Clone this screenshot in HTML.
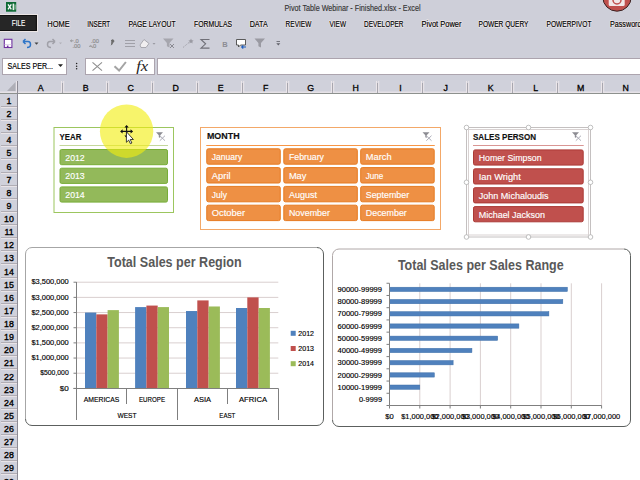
<!DOCTYPE html>
<html><head><meta charset="utf-8">
<style>
html,body{margin:0;padding:0;width:640px;height:480px;overflow:hidden;background:#fff;}
svg text{stroke-width:0.15px;}
svg{display:block;font-family:"Liberation Sans",sans-serif;}
</style></head>
<body>
<svg width="640" height="480" viewBox="0 0 640 480">
<rect x="0" y="0" width="640" height="80" fill="#cecfd9"/>
<text x="284.5" y="11.3" font-size="9.5" fill="#333" textLength="136" lengthAdjust="spacingAndGlyphs" stroke="#333">Pivot Table Webinar - Finished.xlsx - Excel</text>
<rect x="6" y="2" width="10.2" height="9.7" fill="#0f6a35"/>
<path d="M8 4.3 L11.3 9.3 M11.3 4.3 L8 9.3" stroke="#fff" stroke-width="1.3"/>
<rect x="12.6" y="3.6" width="1.6" height="6.5" fill="#e6f2ea"/>
<rect x="14.6" y="4.5" width="1" height="5" fill="#9cc8a8"/>
<circle cx="617" cy="-3" r="14.2" fill="#c0504d" stroke="#3a2020" stroke-width="1"/>
<rect x="608.7" y="-4" width="16" height="10" rx="1.5" fill="#f2e8e8"/>
<circle cx="617" cy="0" r="4" fill="none" stroke="#c0504d" stroke-width="1.5"/>
<rect x="-1" y="14.5" width="38.5" height="17" fill="#262626" stroke="#ece6e6" stroke-width="1"/>
<rect x="-1" y="15.5" width="37.3" height="15" fill="#262626" stroke="#111" stroke-width="1"/>
<g font-size="8.6" fill="#ece6e8" stroke="#ece6e8" stroke-linejoin="round">
<text x="47.3" y="26.7" style="stroke-width:1.6px" textLength="22.5" lengthAdjust="spacingAndGlyphs">HOME</text>
<text x="87.2" y="26.7" style="stroke-width:1.6px" textLength="23" lengthAdjust="spacingAndGlyphs">INSERT</text>
<text x="128.4" y="26.7" style="stroke-width:1.6px" textLength="47.2" lengthAdjust="spacingAndGlyphs">PAGE LAYOUT</text>
<text x="194" y="26.7" style="stroke-width:1.6px" textLength="38" lengthAdjust="spacingAndGlyphs">FORMULAS</text>
<text x="249.7" y="26.7" style="stroke-width:1.6px" textLength="18" lengthAdjust="spacingAndGlyphs">DATA</text>
<text x="285.6" y="26.7" style="stroke-width:1.6px" textLength="25.7" lengthAdjust="spacingAndGlyphs">REVIEW</text>
<text x="329.5" y="26.7" style="stroke-width:1.6px" textLength="16.5" lengthAdjust="spacingAndGlyphs">VIEW</text>
<text x="364" y="26.7" style="stroke-width:1.6px" textLength="39.5" lengthAdjust="spacingAndGlyphs">DEVELOPER</text>
<text x="421.5" y="26.7" style="stroke-width:1.6px" textLength="40" lengthAdjust="spacingAndGlyphs">Pivot Power</text>
<text x="478.5" y="26.7" style="stroke-width:1.6px" textLength="50" lengthAdjust="spacingAndGlyphs">POWER QUERY</text>
<text x="546.5" y="26.7" style="stroke-width:1.6px" textLength="45" lengthAdjust="spacingAndGlyphs">POWERPIVOT</text>
<text x="610" y="26.7" style="stroke-width:1.6px" textLength="31.5" lengthAdjust="spacingAndGlyphs">Password</text>
</g>
<g font-size="8.6" fill="#000" stroke="#000">
<text x="11.8" y="26.3" font-size="9" fill="#fff" stroke="#fff" textLength="13.5" lengthAdjust="spacingAndGlyphs">FILE</text>
<text x="47.3" y="26.7" textLength="22.5" lengthAdjust="spacingAndGlyphs">HOME</text>
<text x="87.2" y="26.7" textLength="23" lengthAdjust="spacingAndGlyphs">INSERT</text>
<text x="128.4" y="26.7" textLength="47.2" lengthAdjust="spacingAndGlyphs">PAGE LAYOUT</text>
<text x="194" y="26.7" textLength="38" lengthAdjust="spacingAndGlyphs">FORMULAS</text>
<text x="249.7" y="26.7" textLength="18" lengthAdjust="spacingAndGlyphs">DATA</text>
<text x="285.6" y="26.7" textLength="25.7" lengthAdjust="spacingAndGlyphs">REVIEW</text>
<text x="329.5" y="26.7" textLength="16.5" lengthAdjust="spacingAndGlyphs">VIEW</text>
<text x="364" y="26.7" textLength="39.5" lengthAdjust="spacingAndGlyphs">DEVELOPER</text>
<text x="421.5" y="26.7" textLength="40" lengthAdjust="spacingAndGlyphs">Pivot Power</text>
<text x="478.5" y="26.7" textLength="50" lengthAdjust="spacingAndGlyphs">POWER QUERY</text>
<text x="546.5" y="26.7" textLength="45" lengthAdjust="spacingAndGlyphs">POWERPIVOT</text>
<text x="610" y="26.7" textLength="31.5" lengthAdjust="spacingAndGlyphs">Password</text>
</g>
<rect x="4.3" y="39.3" width="7.6" height="8.2" fill="#fff" stroke="#7030a0" stroke-width="1.1"/>
<line x1="4.3" y1="44.6" x2="11.9" y2="44.6" stroke="#c8b0d8" stroke-width="0.6"/>
<rect x="6.9" y="45.6" width="1.6" height="1.9" fill="#7030a0"/>
<path d="M23 41.5 L25.5 39 M23 41.5 L25.5 44 M23 41.5 H28 Q30.5 41.5 30.5 44.5 Q30.5 47.5 27 47.5" fill="none" stroke="#2e75c8" stroke-width="1.5"/>
<path d="M34.5 42.5 h4 l-2 2.2z" fill="#444"/>
<path d="M55 41.5 L52.5 39 M55 41.5 L52.5 44 M55 41.5 H50 Q47.5 41.5 47.5 44.5 Q47.5 47.5 51 47.5" fill="none" stroke="#a0a0a8" stroke-width="1.5"/>
<path d="M59 42.5 h3 l-1.5 1.7z" fill="#b0b0b8"/>
<g font-size="5.8" fill="#8a8a8a" stroke="#8a8a8a">
<text x="74" y="43">.0</text><text x="72.5" y="48.3">.00</text>
<text x="91" y="43">.00</text><text x="91.5" y="48.3">.0</text>
</g>
<path d="M70.5 40.8 h3 M70.5 40.8 l1.3 -1.1 M70.5 40.8 l1.3 1.1" stroke="#8a8a8a" stroke-width="0.8" fill="none"/>
<path d="M89 46.3 h2.6 M91.6 46.3 l-1.3 -1.1 M91.6 46.3 l1.3 1.1" stroke="#8a8a8a" stroke-width="0.8" fill="none"/>
<path d="M111.3 41 a1.3 1.3 0 1 1 1.3 1.4 q0 1.8 -1.5 2.8" fill="#6a6a6a" stroke="#6a6a6a" stroke-width="0.9"/>
<g stroke="#a0a0a8" stroke-width="1"><line x1="125" y1="40.5" x2="135" y2="40.5"/><line x1="125" y1="43.5" x2="135" y2="43.5"/><line x1="125" y1="46.5" x2="135" y2="46.5"/></g>
<path d="M140 45 l4 -5.5 l5 4 l-3 4 h-5z" fill="#f0eef0" stroke="#9a9aa2" stroke-width="0.8"/>
<path d="M152.5 43 h3 l-1.5 1.7z" fill="#9a9aa2"/>
<path d="M163 38.5 h10.5 l-4 4.6 v4.4 l-2.6 -1.3 v-3.1z" fill="#a6a6ae"/>
<path d="M170 44 l4 4 M174 44 l-4 4" stroke="#8a8a92" stroke-width="1"/>
<path d="M183 47.5 l6 -5" stroke="#a0a0a8" stroke-width="1" stroke-dasharray="1.2 1"/>
<path d="M191 38.5 l0.8 1.7 l1.8 0.3 l-1.3 1.2 l0.3 1.8 l-1.6 -0.9 l-1.6 0.9 l0.3 -1.8 l-1.3 -1.2 l1.8 -0.3z" fill="#9a9aa2"/>
<path d="M209.5 39.5 h-8.5 l4.6 4.3 l-4.6 4.3 h8.5" fill="none" stroke="#707078" stroke-width="1.1"/>
<text x="222.3" y="47" font-size="7.5" font-weight="bold" fill="#8c8c94" stroke="none">B</text>
<path d="M236.5 39.5 h9 v5.5 h-5 l-2 2 v-2 h-2z" fill="#fff" stroke="#4a4a4a" stroke-width="0.9"/>
<path d="M241.5 47 h4.5 M241.5 47 l1.8 -1.5 M241.5 47 l1.8 1.5" stroke="#2060c0" stroke-width="1.1" fill="none"/>
<path d="M254.5 38.5 h10.5 l-4 4.6 v4.4 l-2.6 -1.3 v-3.1z" fill="#9a9aa2"/>
<path d="M276.5 41.5 h3.5" stroke="#606068" stroke-width="0.8"/><path d="M276.3 43.3 h4 l-2 2.2z" fill="#606068"/>
<rect x="2.5" y="58.5" width="64" height="16" fill="#fff" stroke="#aca4ae" stroke-width="1"/>
<text x="7.4" y="69.2" font-size="8.3" fill="#000" textLength="45.6" lengthAdjust="spacingAndGlyphs" stroke="#000">SALES PER...</text>
<path d="M58 64.3 h5 l-2.5 2.6z" fill="#222"/>
<g fill="#222"><circle cx="76.6" cy="63.5" r="0.75"/><circle cx="76.6" cy="66.2" r="0.75"/><circle cx="76.6" cy="68.7" r="0.75"/></g>
<rect x="85.5" y="58.5" width="69" height="16" fill="#fff" stroke="#aca4ae" stroke-width="1"/>
<path d="M92.5 62.3 l9.5 8.3 M102 62.3 l-9.5 8.3" stroke="#8e8e8e" stroke-width="1.1"/>
<path d="M114.5 66.3 l4.6 4.3 l6.8 -8.6" fill="none" stroke="#a4a4a4" stroke-width="2"/>
<text x="136.2" y="71" font-size="14" font-style="italic" font-family="Liberation Serif" fill="#222" stroke="none" textLength="12" lengthAdjust="spacingAndGlyphs">fx</text>
<rect x="157.5" y="58.5" width="490" height="16" fill="#fff" stroke="#aca4ae" stroke-width="1"/>
<rect x="0" y="80" width="640" height="13" fill="#d0d1db"/>
<rect x="0" y="91.6" width="640" height="1.2" fill="#ece6ea"/>
<rect x="0" y="93" width="640" height="1" fill="#8d918e"/>
<path d="M7 91 L15.5 82 V91z" fill="#aeaeb6"/>
<rect x="61" y="81" width="1" height="11" fill="#ebe6ea"/>
<rect x="63.2" y="81" width="1" height="11" fill="#ebe6ea"/>
<rect x="62" y="83" width="1" height="10" fill="#a8a6ae"/>
<rect x="106" y="81" width="1" height="11" fill="#ebe6ea"/>
<rect x="108.2" y="81" width="1" height="11" fill="#ebe6ea"/>
<rect x="107" y="83" width="1" height="10" fill="#a8a6ae"/>
<rect x="151" y="81" width="1" height="11" fill="#ebe6ea"/>
<rect x="153.2" y="81" width="1" height="11" fill="#ebe6ea"/>
<rect x="152" y="83" width="1" height="10" fill="#a8a6ae"/>
<rect x="196" y="81" width="1" height="11" fill="#ebe6ea"/>
<rect x="198.2" y="81" width="1" height="11" fill="#ebe6ea"/>
<rect x="197" y="83" width="1" height="10" fill="#a8a6ae"/>
<rect x="241" y="81" width="1" height="11" fill="#ebe6ea"/>
<rect x="243.2" y="81" width="1" height="11" fill="#ebe6ea"/>
<rect x="242" y="83" width="1" height="10" fill="#a8a6ae"/>
<rect x="286" y="81" width="1" height="11" fill="#ebe6ea"/>
<rect x="288.2" y="81" width="1" height="11" fill="#ebe6ea"/>
<rect x="287" y="83" width="1" height="10" fill="#a8a6ae"/>
<rect x="331" y="81" width="1" height="11" fill="#ebe6ea"/>
<rect x="333.2" y="81" width="1" height="11" fill="#ebe6ea"/>
<rect x="332" y="83" width="1" height="10" fill="#a8a6ae"/>
<rect x="376" y="81" width="1" height="11" fill="#ebe6ea"/>
<rect x="378.2" y="81" width="1" height="11" fill="#ebe6ea"/>
<rect x="377" y="83" width="1" height="10" fill="#a8a6ae"/>
<rect x="421" y="81" width="1" height="11" fill="#ebe6ea"/>
<rect x="423.2" y="81" width="1" height="11" fill="#ebe6ea"/>
<rect x="422" y="83" width="1" height="10" fill="#a8a6ae"/>
<rect x="466" y="81" width="1" height="11" fill="#ebe6ea"/>
<rect x="468.2" y="81" width="1" height="11" fill="#ebe6ea"/>
<rect x="467" y="83" width="1" height="10" fill="#a8a6ae"/>
<rect x="511" y="81" width="1" height="11" fill="#ebe6ea"/>
<rect x="513.2" y="81" width="1" height="11" fill="#ebe6ea"/>
<rect x="512" y="83" width="1" height="10" fill="#a8a6ae"/>
<rect x="556" y="81" width="1" height="11" fill="#ebe6ea"/>
<rect x="558.2" y="81" width="1" height="11" fill="#ebe6ea"/>
<rect x="557" y="83" width="1" height="10" fill="#a8a6ae"/>
<rect x="601" y="81" width="1" height="11" fill="#ebe6ea"/>
<rect x="603.2" y="81" width="1" height="11" fill="#ebe6ea"/>
<rect x="602" y="83" width="1" height="10" fill="#a8a6ae"/>
<rect x="646" y="81" width="1" height="11" fill="#ebe6ea"/>
<rect x="648.2" y="81" width="1" height="11" fill="#ebe6ea"/>
<rect x="647" y="83" width="1" height="10" fill="#a8a6ae"/>
<rect x="691" y="81" width="1" height="11" fill="#ebe6ea"/>
<rect x="693.2" y="81" width="1" height="11" fill="#ebe6ea"/>
<rect x="692" y="83" width="1" height="10" fill="#a8a6ae"/>
<g font-size="8.8" fill="#000" text-anchor="middle" stroke="#000">
<text x="40.6" y="90.8" style="stroke-width:0.3px">A</text>
<text x="85.6" y="90.8" style="stroke-width:0.3px">B</text>
<text x="130.6" y="90.8" style="stroke-width:0.3px">C</text>
<text x="175.6" y="90.8" style="stroke-width:0.3px">D</text>
<text x="220.6" y="90.8" style="stroke-width:0.3px">E</text>
<text x="265.6" y="90.8" style="stroke-width:0.3px">F</text>
<text x="310.6" y="90.8" style="stroke-width:0.3px">G</text>
<text x="355.6" y="90.8" style="stroke-width:0.3px">H</text>
<text x="400.6" y="90.8" style="stroke-width:0.3px">I</text>
<text x="445.6" y="90.8" style="stroke-width:0.3px">J</text>
<text x="490.6" y="90.8" style="stroke-width:0.3px">K</text>
<text x="535.6" y="90.8" style="stroke-width:0.3px">L</text>
<text x="580.6" y="90.8" style="stroke-width:0.3px">M</text>
<text x="625.6" y="90.8" style="stroke-width:0.3px">N</text>
</g>
<rect x="0" y="94" width="17" height="386" fill="#d0d1db"/>
<rect x="17" y="81" width="1" height="399" fill="#8c8a94"/>
<rect x="16" y="81" width="1" height="11" fill="#ebe6ea"/>
<rect x="1" y="106" width="16" height="1" fill="#b0adb4"/>
<rect x="1" y="107" width="16" height="1" fill="#e9e4e8"/>
<text x="9" y="103.60" font-size="8.8" fill="#000" style="stroke-width:0.35px" text-anchor="middle" stroke="#000">1</text>
<rect x="1" y="119" width="16" height="1" fill="#b0adb4"/>
<rect x="1" y="120" width="16" height="1" fill="#e9e4e8"/>
<text x="9" y="116.60" font-size="8.8" fill="#000" style="stroke-width:0.35px" text-anchor="middle" stroke="#000">2</text>
<rect x="1" y="132" width="16" height="1" fill="#b0adb4"/>
<rect x="1" y="133" width="16" height="1" fill="#e9e4e8"/>
<text x="9" y="129.60" font-size="8.8" fill="#000" style="stroke-width:0.35px" text-anchor="middle" stroke="#000">3</text>
<rect x="1" y="145" width="16" height="1" fill="#b0adb4"/>
<rect x="1" y="146" width="16" height="1" fill="#e9e4e8"/>
<text x="9" y="142.60" font-size="8.8" fill="#000" style="stroke-width:0.35px" text-anchor="middle" stroke="#000">4</text>
<rect x="1" y="158" width="16" height="1" fill="#b0adb4"/>
<rect x="1" y="159" width="16" height="1" fill="#e9e4e8"/>
<text x="9" y="155.60" font-size="8.8" fill="#000" style="stroke-width:0.35px" text-anchor="middle" stroke="#000">5</text>
<rect x="1" y="172" width="16" height="1" fill="#b0adb4"/>
<rect x="1" y="173" width="16" height="1" fill="#e9e4e8"/>
<text x="9" y="169.60" font-size="8.8" fill="#000" style="stroke-width:0.35px" text-anchor="middle" stroke="#000">6</text>
<rect x="1" y="185" width="16" height="1" fill="#b0adb4"/>
<rect x="1" y="186" width="16" height="1" fill="#e9e4e8"/>
<text x="9" y="182.60" font-size="8.8" fill="#000" style="stroke-width:0.35px" text-anchor="middle" stroke="#000">7</text>
<rect x="1" y="198" width="16" height="1" fill="#b0adb4"/>
<rect x="1" y="199" width="16" height="1" fill="#e9e4e8"/>
<text x="9" y="195.60" font-size="8.8" fill="#000" style="stroke-width:0.35px" text-anchor="middle" stroke="#000">8</text>
<rect x="1" y="211" width="16" height="1" fill="#b0adb4"/>
<rect x="1" y="212" width="16" height="1" fill="#e9e4e8"/>
<text x="9" y="208.60" font-size="8.8" fill="#000" style="stroke-width:0.35px" text-anchor="middle" stroke="#000">9</text>
<rect x="1" y="224" width="16" height="1" fill="#b0adb4"/>
<rect x="1" y="225" width="16" height="1" fill="#e9e4e8"/>
<text x="9" y="221.60" font-size="8.8" fill="#000" style="stroke-width:0.35px" text-anchor="middle" stroke="#000">10</text>
<rect x="1" y="237" width="16" height="1" fill="#b0adb4"/>
<rect x="1" y="238" width="16" height="1" fill="#e9e4e8"/>
<text x="9" y="234.60" font-size="8.8" fill="#000" style="stroke-width:0.35px" text-anchor="middle" stroke="#000">11</text>
<rect x="1" y="250" width="16" height="1" fill="#b0adb4"/>
<rect x="1" y="251" width="16" height="1" fill="#e9e4e8"/>
<text x="9" y="247.60" font-size="8.8" fill="#000" style="stroke-width:0.35px" text-anchor="middle" stroke="#000">12</text>
<rect x="1" y="263" width="16" height="1" fill="#b0adb4"/>
<rect x="1" y="264" width="16" height="1" fill="#e9e4e8"/>
<text x="9" y="260.60" font-size="8.8" fill="#000" style="stroke-width:0.35px" text-anchor="middle" stroke="#000">13</text>
<rect x="1" y="277" width="16" height="1" fill="#b0adb4"/>
<rect x="1" y="278" width="16" height="1" fill="#e9e4e8"/>
<text x="9" y="274.60" font-size="8.8" fill="#000" style="stroke-width:0.35px" text-anchor="middle" stroke="#000">14</text>
<rect x="1" y="290" width="16" height="1" fill="#b0adb4"/>
<rect x="1" y="291" width="16" height="1" fill="#e9e4e8"/>
<text x="9" y="287.60" font-size="8.8" fill="#000" style="stroke-width:0.35px" text-anchor="middle" stroke="#000">15</text>
<rect x="1" y="303" width="16" height="1" fill="#b0adb4"/>
<rect x="1" y="304" width="16" height="1" fill="#e9e4e8"/>
<text x="9" y="300.60" font-size="8.8" fill="#000" style="stroke-width:0.35px" text-anchor="middle" stroke="#000">16</text>
<rect x="1" y="316" width="16" height="1" fill="#b0adb4"/>
<rect x="1" y="317" width="16" height="1" fill="#e9e4e8"/>
<text x="9" y="313.60" font-size="8.8" fill="#000" style="stroke-width:0.35px" text-anchor="middle" stroke="#000">17</text>
<rect x="1" y="329" width="16" height="1" fill="#b0adb4"/>
<rect x="1" y="330" width="16" height="1" fill="#e9e4e8"/>
<text x="9" y="326.60" font-size="8.8" fill="#000" style="stroke-width:0.35px" text-anchor="middle" stroke="#000">18</text>
<rect x="1" y="342" width="16" height="1" fill="#b0adb4"/>
<rect x="1" y="343" width="16" height="1" fill="#e9e4e8"/>
<text x="9" y="339.60" font-size="8.8" fill="#000" style="stroke-width:0.35px" text-anchor="middle" stroke="#000">19</text>
<rect x="1" y="355" width="16" height="1" fill="#b0adb4"/>
<rect x="1" y="356" width="16" height="1" fill="#e9e4e8"/>
<text x="9" y="352.60" font-size="8.8" fill="#000" style="stroke-width:0.35px" text-anchor="middle" stroke="#000">20</text>
<rect x="1" y="368" width="16" height="1" fill="#b0adb4"/>
<rect x="1" y="369" width="16" height="1" fill="#e9e4e8"/>
<text x="9" y="365.60" font-size="8.8" fill="#000" style="stroke-width:0.35px" text-anchor="middle" stroke="#000">21</text>
<rect x="1" y="382" width="16" height="1" fill="#b0adb4"/>
<rect x="1" y="383" width="16" height="1" fill="#e9e4e8"/>
<text x="9" y="379.60" font-size="8.8" fill="#000" style="stroke-width:0.35px" text-anchor="middle" stroke="#000">22</text>
<rect x="1" y="395" width="16" height="1" fill="#b0adb4"/>
<rect x="1" y="396" width="16" height="1" fill="#e9e4e8"/>
<text x="9" y="392.60" font-size="8.8" fill="#000" style="stroke-width:0.35px" text-anchor="middle" stroke="#000">23</text>
<rect x="1" y="408" width="16" height="1" fill="#b0adb4"/>
<rect x="1" y="409" width="16" height="1" fill="#e9e4e8"/>
<text x="9" y="405.60" font-size="8.8" fill="#000" style="stroke-width:0.35px" text-anchor="middle" stroke="#000">24</text>
<rect x="1" y="421" width="16" height="1" fill="#b0adb4"/>
<rect x="1" y="422" width="16" height="1" fill="#e9e4e8"/>
<text x="9" y="418.60" font-size="8.8" fill="#000" style="stroke-width:0.35px" text-anchor="middle" stroke="#000">25</text>
<rect x="1" y="434" width="16" height="1" fill="#b0adb4"/>
<rect x="1" y="435" width="16" height="1" fill="#e9e4e8"/>
<text x="9" y="431.60" font-size="8.8" fill="#000" style="stroke-width:0.35px" text-anchor="middle" stroke="#000">26</text>
<rect x="1" y="447" width="16" height="1" fill="#b0adb4"/>
<rect x="1" y="448" width="16" height="1" fill="#e9e4e8"/>
<text x="9" y="444.60" font-size="8.8" fill="#000" style="stroke-width:0.35px" text-anchor="middle" stroke="#000">27</text>
<rect x="1" y="460" width="16" height="1" fill="#b0adb4"/>
<rect x="1" y="461" width="16" height="1" fill="#e9e4e8"/>
<text x="9" y="457.60" font-size="8.8" fill="#000" style="stroke-width:0.35px" text-anchor="middle" stroke="#000">28</text>
<rect x="1" y="473" width="16" height="1" fill="#b0adb4"/>
<rect x="1" y="474" width="16" height="1" fill="#e9e4e8"/>
<text x="9" y="470.60" font-size="8.8" fill="#000" style="stroke-width:0.35px" text-anchor="middle" stroke="#000">29</text>
<rect x="1" y="487" width="16" height="1" fill="#b0adb4"/>
<rect x="1" y="488" width="16" height="1" fill="#e9e4e8"/>
<text x="9" y="484.60" font-size="8.8" fill="#000" style="stroke-width:0.35px" text-anchor="middle" stroke="#000">30</text>
<rect x="1" y="500" width="16" height="1" fill="#b0adb4"/>
<rect x="1" y="501" width="16" height="1" fill="#e9e4e8"/>
<rect x="54" y="127.5" width="119.5" height="85.0" fill="#fff" stroke="#9cc65e" stroke-width="1"/>
<text x="59.5" y="139.9" font-size="9.2" font-weight="bold" fill="#111" textLength="21.8" lengthAdjust="spacingAndGlyphs" stroke="#111">YEAR</text>
<path d="M156 132.2 h7 l-2.8 3.1 v2.8 l-1.4 -0.8 v-2z" fill="#8c8c92"/><path d="M159.8 135.7 l5.2 5 M165 135.7 l-5.2 5" stroke="#a4a4b0" stroke-width="0.9"/>
<line x1="59.5" y1="145.5" x2="168" y2="145.5" stroke="#c4d79b" stroke-width="1.2"/>
<rect x="60.0" y="149.5" width="107.5" height="15.199999999999989" rx="1.6" fill="#93b95a" stroke="#78ad38" stroke-width="1"/>
<text x="65.3" y="160.60" font-size="9" fill="#fff" textLength="19.4" lengthAdjust="spacingAndGlyphs" stroke="#fff">2012</text>
<rect x="60.0" y="168.2" width="107.5" height="15.199999999999989" rx="1.6" fill="#93b95a" stroke="#78ad38" stroke-width="1"/>
<text x="65.3" y="179.30" font-size="9" fill="#fff" textLength="19.4" lengthAdjust="spacingAndGlyphs" stroke="#fff">2013</text>
<rect x="60.0" y="186.9" width="107.5" height="15.199999999999989" rx="1.6" fill="#93b95a" stroke="#78ad38" stroke-width="1"/>
<text x="65.3" y="198.00" font-size="9" fill="#fff" textLength="19.4" lengthAdjust="spacingAndGlyphs" stroke="#fff">2014</text>
<rect x="200.5" y="127.5" width="240.0" height="102.0" fill="#fff" stroke="#f3a868" stroke-width="1"/>
<text x="206.9" y="139.3" font-size="9.2" font-weight="bold" fill="#111" textLength="32.7" lengthAdjust="spacingAndGlyphs" stroke="#111">MONTH</text>
<path d="M422.5 132.2 h7 l-2.8 3.1 v2.8 l-1.4 -0.8 v-2z" fill="#8c8c92"/><path d="M426.3 135.7 l5.2 5 M431.5 135.7 l-5.2 5" stroke="#a4a4b0" stroke-width="0.9"/>
<line x1="206.25" y1="145.5" x2="434.75" y2="145.5" stroke="#f79646" stroke-width="1.2"/>
<rect x="206.75" y="148.8" width="73.5" height="15.400000000000006" rx="1.6" fill="#ee9044" stroke="#e67a20" stroke-width="1"/>
<text x="211.85" y="159.90" font-size="9" fill="#fff" textLength="30.4" lengthAdjust="spacingAndGlyphs" stroke="#fff">January</text>
<rect x="283.8" y="148.8" width="73.5" height="15.400000000000006" rx="1.6" fill="#ee9044" stroke="#e67a20" stroke-width="1"/>
<text x="288.90000000000003" y="159.90" font-size="9" fill="#fff" textLength="35.1" lengthAdjust="spacingAndGlyphs" stroke="#fff">February</text>
<rect x="360.7" y="148.8" width="73.5" height="15.400000000000006" rx="1.6" fill="#ee9044" stroke="#e67a20" stroke-width="1"/>
<text x="365.8" y="159.90" font-size="9" fill="#fff" textLength="25.8" lengthAdjust="spacingAndGlyphs" stroke="#fff">March</text>
<rect x="206.75" y="167.60000000000002" width="73.5" height="15.400000000000006" rx="1.6" fill="#ee9044" stroke="#e67a20" stroke-width="1"/>
<text x="211.85" y="178.70" font-size="9" fill="#fff" textLength="18.7" lengthAdjust="spacingAndGlyphs" stroke="#fff">April</text>
<rect x="283.8" y="167.60000000000002" width="73.5" height="15.400000000000006" rx="1.6" fill="#ee9044" stroke="#e67a20" stroke-width="1"/>
<text x="288.90000000000003" y="178.70" font-size="9" fill="#fff" textLength="17.5" lengthAdjust="spacingAndGlyphs" stroke="#fff">May</text>
<rect x="360.7" y="167.60000000000002" width="73.5" height="15.400000000000006" rx="1.6" fill="#ee9044" stroke="#e67a20" stroke-width="1"/>
<text x="365.8" y="178.70" font-size="9" fill="#fff" textLength="17.6" lengthAdjust="spacingAndGlyphs" stroke="#fff">June</text>
<rect x="206.75" y="186.4" width="73.5" height="15.400000000000006" rx="1.6" fill="#ee9044" stroke="#e67a20" stroke-width="1"/>
<text x="211.85" y="197.50" font-size="9" fill="#fff" textLength="15.2" lengthAdjust="spacingAndGlyphs" stroke="#fff">July</text>
<rect x="283.8" y="186.4" width="73.5" height="15.400000000000006" rx="1.6" fill="#ee9044" stroke="#e67a20" stroke-width="1"/>
<text x="288.90000000000003" y="197.50" font-size="9" fill="#fff" textLength="28.1" lengthAdjust="spacingAndGlyphs" stroke="#fff">August</text>
<rect x="360.7" y="186.4" width="73.5" height="15.400000000000006" rx="1.6" fill="#ee9044" stroke="#e67a20" stroke-width="1"/>
<text x="365.8" y="197.50" font-size="9" fill="#fff" textLength="43.3" lengthAdjust="spacingAndGlyphs" stroke="#fff">September</text>
<rect x="206.75" y="205.20000000000002" width="73.5" height="15.400000000000006" rx="1.6" fill="#ee9044" stroke="#e67a20" stroke-width="1"/>
<text x="211.85" y="216.30" font-size="9" fill="#fff" textLength="33.2" lengthAdjust="spacingAndGlyphs" stroke="#fff">October</text>
<rect x="283.8" y="205.20000000000002" width="73.5" height="15.400000000000006" rx="1.6" fill="#ee9044" stroke="#e67a20" stroke-width="1"/>
<text x="288.90000000000003" y="216.30" font-size="9" fill="#fff" textLength="41.0" lengthAdjust="spacingAndGlyphs" stroke="#fff">November</text>
<rect x="360.7" y="205.20000000000002" width="73.5" height="15.400000000000006" rx="1.6" fill="#ee9044" stroke="#e67a20" stroke-width="1"/>
<text x="365.8" y="216.30" font-size="9" fill="#fff" textLength="41.0" lengthAdjust="spacingAndGlyphs" stroke="#fff">December</text>
<rect x="468.5" y="129.5" width="120.0" height="105.5" fill="#fff" stroke="#d9d2d2" stroke-width="1"/>
<text x="473" y="139.9" font-size="9.2" font-weight="bold" fill="#111" textLength="63" lengthAdjust="spacingAndGlyphs" stroke="#111">SALES PERSON</text>
<path d="M572 132.2 h7 l-2.8 3.1 v2.8 l-1.4 -0.8 v-2z" fill="#8c8c92"/><path d="M575.8 135.7 l5.2 5 M581 135.7 l-5.2 5" stroke="#a4a4b0" stroke-width="0.9"/>
<line x1="473" y1="145.5" x2="583.7" y2="145.5" stroke="#d99694" stroke-width="1.2"/>
<rect x="473.5" y="149.9" width="109.70000000000005" height="15.199999999999989" rx="1.6" fill="#c0504d" stroke="#ab3a36" stroke-width="1"/>
<text x="478.75" y="161.00" font-size="9" fill="#fff" textLength="62.8" lengthAdjust="spacingAndGlyphs" stroke="#fff">Homer Simpson</text>
<rect x="473.5" y="168.8" width="109.70000000000005" height="15.199999999999989" rx="1.6" fill="#c0504d" stroke="#ab3a36" stroke-width="1"/>
<text x="478.75" y="179.90" font-size="9" fill="#fff" textLength="42" lengthAdjust="spacingAndGlyphs" stroke="#fff">Ian Wright</text>
<rect x="473.5" y="187.7" width="109.70000000000005" height="15.199999999999989" rx="1.6" fill="#c0504d" stroke="#ab3a36" stroke-width="1"/>
<text x="478.75" y="198.80" font-size="9" fill="#fff" textLength="69.8" lengthAdjust="spacingAndGlyphs" stroke="#fff">John Michaloudis</text>
<rect x="473.5" y="206.6" width="109.70000000000005" height="15.199999999999989" rx="1.6" fill="#c0504d" stroke="#ab3a36" stroke-width="1"/>
<text x="478.75" y="217.70" font-size="9" fill="#fff" textLength="66.2" lengthAdjust="spacingAndGlyphs" stroke="#fff">Michael Jackson</text>
<rect x="466.5" y="127.5" width="124" height="109.5" fill="none" stroke="#c4c0c0" stroke-width="1"/>
<circle cx="466.5" cy="127.5" r="2.3" fill="#fff" stroke="#b0b0b0" stroke-width="0.8"/>
<circle cx="528.5" cy="127.5" r="2.3" fill="#fff" stroke="#b0b0b0" stroke-width="0.8"/>
<circle cx="590.5" cy="127.5" r="2.3" fill="#fff" stroke="#b0b0b0" stroke-width="0.8"/>
<circle cx="466.5" cy="182.3" r="2.3" fill="#fff" stroke="#b0b0b0" stroke-width="0.8"/>
<circle cx="590.5" cy="182.3" r="2.3" fill="#fff" stroke="#b0b0b0" stroke-width="0.8"/>
<circle cx="466.5" cy="237" r="2.3" fill="#fff" stroke="#b0b0b0" stroke-width="0.8"/>
<circle cx="528.5" cy="237" r="2.3" fill="#fff" stroke="#b0b0b0" stroke-width="0.8"/>
<circle cx="590.5" cy="237" r="2.3" fill="#fff" stroke="#b0b0b0" stroke-width="0.8"/>
<rect x="25.5" y="247.5" width="298.0" height="178.0" rx="6.5" fill="#fff"/>
<path d="M25.5 419.0 V254.0 A6.5 6.5 0 0 1 32.0 247.5 H317.0" fill="none" stroke="#a6a6a6" stroke-width="1"/>
<path d="M317.0 247.5 A6.5 6.5 0 0 1 323.5 254.0 V419.0 A6.5 6.5 0 0 1 317.0 425.5 H32.0 A6.5 6.5 0 0 1 25.5 419.0" fill="none" stroke="#5c605e" stroke-width="1"/>
<text x="107.3" y="267.3" font-size="13.8" font-weight="bold" fill="#595959" style="stroke-width:0" textLength="134.3" lengthAdjust="spacingAndGlyphs" stroke="#595959">Total Sales per Region</text>
<g stroke="#d9cfcf" stroke-width="1">
<line x1="76.5" y1="373.23" x2="278.3" y2="373.23"/>
<line x1="76.5" y1="358.06" x2="278.3" y2="358.06"/>
<line x1="76.5" y1="342.89" x2="278.3" y2="342.89"/>
<line x1="76.5" y1="327.72" x2="278.3" y2="327.72"/>
<line x1="76.5" y1="312.55" x2="278.3" y2="312.55"/>
<line x1="76.5" y1="297.38" x2="278.3" y2="297.38"/>
<line x1="76.5" y1="282.21" x2="278.3" y2="282.21"/>
</g>
<g font-size="7.4" fill="#000" text-anchor="end" stroke="#000">
<text x="68.7" y="390.60" textLength="9" lengthAdjust="spacingAndGlyphs">$0</text>
<text x="68.7" y="375.43" textLength="28.5" lengthAdjust="spacingAndGlyphs">$500,000</text>
<text x="68.7" y="360.26" textLength="37.3" lengthAdjust="spacingAndGlyphs">$1,000,000</text>
<text x="68.7" y="345.09" textLength="37.3" lengthAdjust="spacingAndGlyphs">$1,500,000</text>
<text x="68.7" y="329.92" textLength="37.3" lengthAdjust="spacingAndGlyphs">$2,000,000</text>
<text x="68.7" y="314.75" textLength="37.3" lengthAdjust="spacingAndGlyphs">$2,500,000</text>
<text x="68.7" y="299.58" textLength="37.3" lengthAdjust="spacingAndGlyphs">$3,000,000</text>
<text x="68.7" y="284.41" textLength="37.3" lengthAdjust="spacingAndGlyphs">$3,500,000</text>
</g>
<g stroke="#7f7f7f" stroke-width="1">
<line x1="73.5" y1="388.40" x2="76.5" y2="388.40"/>
<line x1="73.5" y1="373.23" x2="76.5" y2="373.23"/>
<line x1="73.5" y1="358.06" x2="76.5" y2="358.06"/>
<line x1="73.5" y1="342.89" x2="76.5" y2="342.89"/>
<line x1="73.5" y1="327.72" x2="76.5" y2="327.72"/>
<line x1="73.5" y1="312.55" x2="76.5" y2="312.55"/>
<line x1="73.5" y1="297.38" x2="76.5" y2="297.38"/>
<line x1="73.5" y1="282.21" x2="76.5" y2="282.21"/>
</g>
<rect x="85.00" y="312.55" width="11.30" height="75.85" fill="#4f81bd"/>
<rect x="96.30" y="314.37" width="11.30" height="74.03" fill="#c0504d"/>
<rect x="107.60" y="310.12" width="11.30" height="78.28" fill="#9bbb59"/>
<rect x="135.10" y="307.09" width="11.30" height="81.31" fill="#4f81bd"/>
<rect x="146.40" y="305.57" width="11.30" height="82.83" fill="#c0504d"/>
<rect x="157.70" y="307.09" width="11.30" height="81.31" fill="#9bbb59"/>
<rect x="186.00" y="311.03" width="11.30" height="77.37" fill="#4f81bd"/>
<rect x="197.30" y="300.41" width="11.30" height="87.99" fill="#c0504d"/>
<rect x="208.60" y="306.48" width="11.30" height="81.92" fill="#9bbb59"/>
<rect x="236.00" y="308.00" width="11.30" height="80.40" fill="#4f81bd"/>
<rect x="247.30" y="297.38" width="11.30" height="91.02" fill="#c0504d"/>
<rect x="258.60" y="308.00" width="11.30" height="80.40" fill="#9bbb59"/>
<g stroke="#7f7f7f" stroke-width="1" fill="none">
<line x1="76.5" y1="282" x2="76.5" y2="420"/>
<line x1="73.5" y1="388.5" x2="278.5" y2="388.5"/>
<line x1="126.5" y1="388.5" x2="126.5" y2="404"/>
<line x1="227.5" y1="388.5" x2="227.5" y2="404"/>
<line x1="177.5" y1="388.5" x2="177.5" y2="420"/>
<line x1="278.5" y1="388.5" x2="278.5" y2="420"/>
</g>
<g font-size="7.4" fill="#000" text-anchor="middle" stroke="#000">
<text x="101.5" y="402" textLength="35.5" lengthAdjust="spacingAndGlyphs">AMERICAS</text>
<text x="152" y="402" textLength="26" lengthAdjust="spacingAndGlyphs">EUROPE</text>
<text x="202.5" y="402" textLength="17" lengthAdjust="spacingAndGlyphs">ASIA</text>
<text x="253" y="402" textLength="28" lengthAdjust="spacingAndGlyphs">AFRICA</text>
<text x="127" y="418.2" textLength="19" lengthAdjust="spacingAndGlyphs">WEST</text>
<text x="227.3" y="418.2" textLength="16" lengthAdjust="spacingAndGlyphs">EAST</text>
</g>
<rect x="290.7" y="330.80" width="5" height="5" fill="#4f81bd"/>
<text x="298.3" y="335.90" font-size="7.4" fill="#000" textLength="15.7" lengthAdjust="spacingAndGlyphs" stroke="#000">2012</text>
<rect x="290.7" y="346.00" width="5" height="5" fill="#c0504d"/>
<text x="298.3" y="351.10" font-size="7.4" fill="#000" textLength="15.7" lengthAdjust="spacingAndGlyphs" stroke="#000">2013</text>
<rect x="290.7" y="361.20" width="5" height="5" fill="#9bbb59"/>
<text x="298.3" y="366.30" font-size="7.4" fill="#000" textLength="15.7" lengthAdjust="spacingAndGlyphs" stroke="#000">2014</text>
<rect x="332.5" y="249" width="298.0" height="177.5" rx="6.5" fill="#fff"/>
<path d="M332.5 420.0 V255.5 A6.5 6.5 0 0 1 339.0 249 H624.0" fill="none" stroke="#b0a8a8" stroke-width="1"/>
<path d="M624.0 249 A6.5 6.5 0 0 1 630.5 255.5 V420.0 A6.5 6.5 0 0 1 624.0 426.5 H339.0 A6.5 6.5 0 0 1 332.5 420.0" fill="none" stroke="#5c605e" stroke-width="1"/>
<text x="397.9" y="269.5" font-size="13.8" font-weight="bold" fill="#595959" style="stroke-width:0" textLength="165.7" lengthAdjust="spacingAndGlyphs" stroke="#595959">Total Sales per Sales Range</text>
<g stroke="#d9cfcf" stroke-width="1">
<line x1="419.80" y1="283.3" x2="419.80" y2="405.5"/>
<line x1="450.10" y1="283.3" x2="450.10" y2="405.5"/>
<line x1="480.40" y1="283.3" x2="480.40" y2="405.5"/>
<line x1="510.70" y1="283.3" x2="510.70" y2="405.5"/>
<line x1="541.00" y1="283.3" x2="541.00" y2="405.5"/>
<line x1="571.30" y1="283.3" x2="571.30" y2="405.5"/>
<line x1="601.60" y1="283.3" x2="601.60" y2="405.5"/>
</g>
<rect x="389.5" y="287.21" width="177.86" height="4.3" fill="#4f81bd" stroke="#3d6ea8" stroke-width="0.5"/>
<text x="382" y="291.96" font-size="7.4" fill="#000" text-anchor="end" textLength="44.5" lengthAdjust="spacingAndGlyphs" stroke="#000">90000-99999</text>
<rect x="389.5" y="299.44" width="173.32" height="4.3" fill="#4f81bd" stroke="#3d6ea8" stroke-width="0.5"/>
<text x="382" y="304.19" font-size="7.4" fill="#000" text-anchor="end" textLength="44.5" lengthAdjust="spacingAndGlyphs" stroke="#000">80000-89999</text>
<rect x="389.5" y="311.66" width="159.38" height="4.3" fill="#4f81bd" stroke="#3d6ea8" stroke-width="0.5"/>
<text x="382" y="316.41" font-size="7.4" fill="#000" text-anchor="end" textLength="44.5" lengthAdjust="spacingAndGlyphs" stroke="#000">70000-79999</text>
<rect x="389.5" y="323.89" width="129.38" height="4.3" fill="#4f81bd" stroke="#3d6ea8" stroke-width="0.5"/>
<text x="382" y="328.64" font-size="7.4" fill="#000" text-anchor="end" textLength="44.5" lengthAdjust="spacingAndGlyphs" stroke="#000">60000-69999</text>
<rect x="389.5" y="336.11" width="108.17" height="4.3" fill="#4f81bd" stroke="#3d6ea8" stroke-width="0.5"/>
<text x="382" y="340.86" font-size="7.4" fill="#000" text-anchor="end" textLength="44.5" lengthAdjust="spacingAndGlyphs" stroke="#000">50000-59999</text>
<rect x="389.5" y="348.34" width="82.42" height="4.3" fill="#4f81bd" stroke="#3d6ea8" stroke-width="0.5"/>
<text x="382" y="353.09" font-size="7.4" fill="#000" text-anchor="end" textLength="44.5" lengthAdjust="spacingAndGlyphs" stroke="#000">40000-49999</text>
<rect x="389.5" y="360.56" width="63.63" height="4.3" fill="#4f81bd" stroke="#3d6ea8" stroke-width="0.5"/>
<text x="382" y="365.31" font-size="7.4" fill="#000" text-anchor="end" textLength="44.5" lengthAdjust="spacingAndGlyphs" stroke="#000">30000-39999</text>
<rect x="389.5" y="372.79" width="44.84" height="4.3" fill="#4f81bd" stroke="#3d6ea8" stroke-width="0.5"/>
<text x="382" y="377.54" font-size="7.4" fill="#000" text-anchor="end" textLength="44.5" lengthAdjust="spacingAndGlyphs" stroke="#000">20000-29999</text>
<rect x="389.5" y="385.01" width="30.30" height="4.3" fill="#4f81bd" stroke="#3d6ea8" stroke-width="0.5"/>
<text x="382" y="389.76" font-size="7.4" fill="#000" text-anchor="end" textLength="44.5" lengthAdjust="spacingAndGlyphs" stroke="#000">10000-19999</text>
<text x="382" y="401.99" font-size="7.4" fill="#000" text-anchor="end" textLength="23" lengthAdjust="spacingAndGlyphs" stroke="#000">0-9999</text>
<g stroke="#7f7f7f" stroke-width="1" fill="none">
<line x1="389.5" y1="283.3" x2="389.5" y2="405.5"/>
<line x1="389.5" y1="405.5" x2="601.7" y2="405.5"/>
<line x1="386.5" y1="283.25" x2="389.5" y2="283.25"/>
<line x1="386.5" y1="295.48" x2="389.5" y2="295.48"/>
<line x1="386.5" y1="307.70" x2="389.5" y2="307.70"/>
<line x1="386.5" y1="319.93" x2="389.5" y2="319.93"/>
<line x1="386.5" y1="332.15" x2="389.5" y2="332.15"/>
<line x1="386.5" y1="344.38" x2="389.5" y2="344.38"/>
<line x1="386.5" y1="356.60" x2="389.5" y2="356.60"/>
<line x1="386.5" y1="368.82" x2="389.5" y2="368.82"/>
<line x1="386.5" y1="381.05" x2="389.5" y2="381.05"/>
<line x1="386.5" y1="393.27" x2="389.5" y2="393.27"/>
<line x1="386.5" y1="405.50" x2="389.5" y2="405.50"/>
<line x1="389.50" y1="405.5" x2="389.50" y2="408.5"/>
<line x1="419.80" y1="405.5" x2="419.80" y2="408.5"/>
<line x1="450.10" y1="405.5" x2="450.10" y2="408.5"/>
<line x1="480.40" y1="405.5" x2="480.40" y2="408.5"/>
<line x1="510.70" y1="405.5" x2="510.70" y2="408.5"/>
<line x1="541.00" y1="405.5" x2="541.00" y2="408.5"/>
<line x1="571.30" y1="405.5" x2="571.30" y2="408.5"/>
<line x1="601.60" y1="405.5" x2="601.60" y2="408.5"/>
</g>
<g font-size="7.4" fill="#000" text-anchor="middle" stroke="#000">
<text x="389.50" y="418.6" textLength="8.5" lengthAdjust="spacingAndGlyphs">$0</text>
<text x="419.80" y="418.6" textLength="37.3" lengthAdjust="spacingAndGlyphs">$1,000,000</text>
<text x="450.10" y="418.6" textLength="37.3" lengthAdjust="spacingAndGlyphs">$2,000,000</text>
<text x="480.40" y="418.6" textLength="37.3" lengthAdjust="spacingAndGlyphs">$3,000,000</text>
<text x="510.70" y="418.6" textLength="37.3" lengthAdjust="spacingAndGlyphs">$4,000,000</text>
<text x="541.00" y="418.6" textLength="37.3" lengthAdjust="spacingAndGlyphs">$5,000,000</text>
<text x="571.30" y="418.6" textLength="37.3" lengthAdjust="spacingAndGlyphs">$6,000,000</text>
<text x="601.60" y="418.6" textLength="37.3" lengthAdjust="spacingAndGlyphs">$7,000,000</text>
</g>
<circle cx="126.6" cy="131.2" r="26.7" fill="#f2ee10" opacity="0.62"/>
<g transform="translate(126.6,131.4)"><path d="M-5 0 H5 M0 -5 V5" stroke="#111" stroke-width="1.1"/><path d="M0 -6.5 L-2.2 -4 H2.2z M0 6.5 L-2.2 4 H2.2z M-6.5 0 L-4 -2.2 V2.2z M6.5 0 L4 -2.2 V2.2z" fill="#111"/><path d="M-0.2 0.3 v10.6 l2.3 -2.2 l1.7 3.6 l1.5 -0.7 l-1.7 -3.5 h3.2z" fill="#fff" stroke="#111" stroke-width="0.8" stroke-linejoin="round"/></g>
</svg></body></html>
